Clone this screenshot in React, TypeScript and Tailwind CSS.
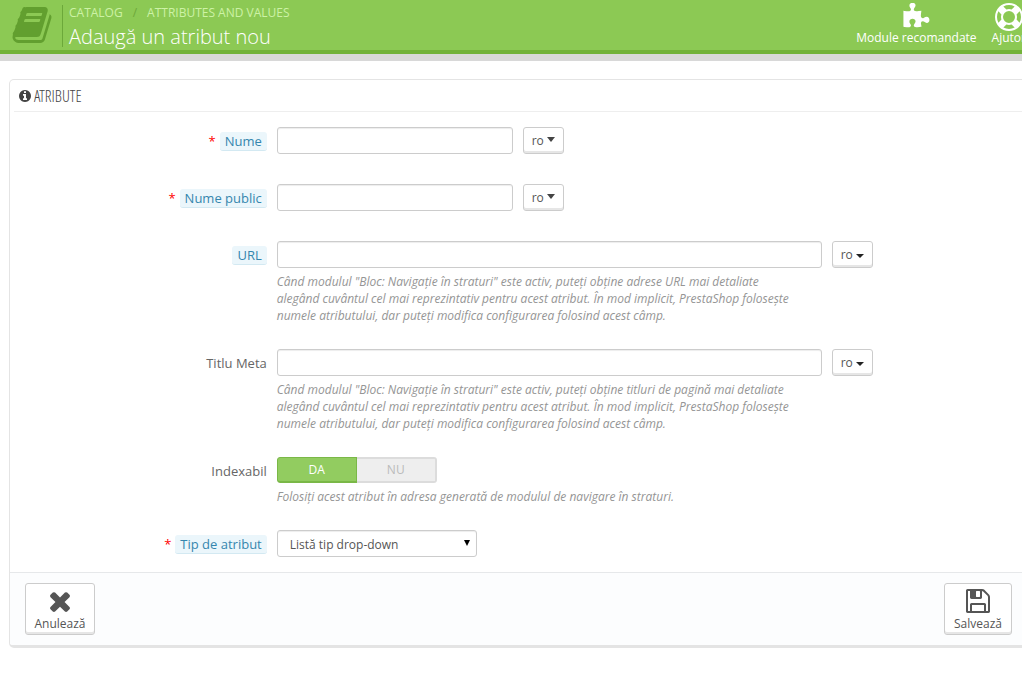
import React, { useState } from 'react';

const ICONS = {
  book: 'M1703 478q40 57 18 129l-275 906q-19 64-76.5 107.5t-122.5 43.5h-923q-77 0-148.5-53.5t-99.5-131.5q-24-67-2-127 0-4 3-27t4-37q1-8-3-21.5t-3-19.5q2-11 8-21t16.5-23.5 16.5-23.5q23-38 45-91.5t30-91.5q3-10 .5-30t-.5-28q3-11 17-28t17-23q21-36 42-92t25-90q1-9-2.5-32t.5-28q4-13 22-30.5t22-22.5q19-26 42.5-84.5t27.5-96.5q1-8-3-25.5t-2-26.5q2-8 9-18t18-23 17-21q8-12 16.5-30.5t15-35 16-36 19.5-32 26.5-23.5 36-11.5 47.5 5.5l-1 3q38-9 51-9h761q74 0 114 56t18 130l-274 906q-36 119-71.5 153.5t-128.5 34.5h-869q-27 0-38 15-11 16-1 43 24 70 144 70h923q29 0 56-15.5t35-41.5l300-987q7-22 5-57 38 15 59 43zm-1064 2q-4 13 2 22.5t20 9.5h608q13 0 25.5-9.5t16.5-22.5l21-64q4-13-2-22.5t-20-9.5h-608q-13 0-25.5 9.5t-16.5 22.5zm-83 256q-4 13 2 22.5t20 9.5h608q13 0 25.5-9.5t16.5-22.5l21-64q4-13-2-22.5t-20-9.5h-608q-13 0-25.5 9.5t-16.5 22.5z',
  puzzle: 'M1755 1083q0 81-44.5 135t-123.5 54q-41 0-77.5-17.5t-59-38-56.5-38-71-17.5q-110 0-110 124 0 39 16 115t15 115v5q-22 0-33 1-34 3-97.5 11.5t-115.5 13.5-98 5q-61 0-103-26.5t-42-83.5q0-37 17.5-71t38-56.5 38-59 17.5-77.5q0-79-54-123.5t-135-44.5q-84 0-143 45.5t-59 127.5q0 43 15 83t33.5 64.5 33.5 53 15 50.5q0 45-46 89-37 35-117 35-95 0-245-24-9-2-27.5-4t-27.5-4l-13-2q-1 0-3-1-2 0-2-1v-1024q2 1 17.5 3.5t34 5 21.5 3.5q150 24 245 24 80 0 117-35 46-44 46-89 0-22-15-50.5t-33.5-53-33.5-64.5-15-83q0-82 59-127.5t144-45.5q80 0 134 44.5t54 123.5q0 41-17.5 77.5t-38 59-38 56.5-17.5 71q0 57 42 83.5t103 26.5q64 0 180-15t163-17v2q-1 2-3.5 17.5t-5 34-3.5 21.5q-24 150-24 245 0 80 35 117 44 46 89 46 22 0 50.5-15t53-33.5 64.5-33.5 83-15q82 0 127.5 59t45.5 143z',
  lifeRing: 'M896 0q182 0 348 71t286 191 191 286 71 348-71 348-191 286-286 191-348 71-348-71-286-191-191-286-71-348 71-348 191-286 286-191 348-71zm0 128q-190 0-361 90l194 194q82-28 167-28t167 28l194-194q-171-90-361-90zm-678 1129l194-194q-28-82-28-167t28-167l-194-194q-90 171-90 361t90 361zm678 407q190 0 361-90l-194-194q-82 28-167 28t-167-28l-194 194q171 90 361 90zm0-384q159 0 271.5-112.5t112.5-271.5-112.5-271.5-271.5-112.5-271.5 112.5-112.5 271.5 112.5 271.5 271.5 112.5zm484-217l194 194q90-171 90-361t-90-361l-194 194q28 82 28 167t-28 167z',
  info: 'M1152 1376v-160q0-14-9-23t-23-9h-96v-512q0-14-9-23t-23-9h-320q-14 0-23 9t-9 23v160q0 14 9 23t23 9h96v320h-96q-14 0-23 9t-9 23v160q0 14 9 23t23 9h448q14 0 23-9t9-23zm-128-896v-160q0-14-9-23t-23-9h-192q-14 0-23 9t-9 23v160q0 14 9 23t23 9h192q14 0 23-9t9-23zm640 416q0 209-103 385.5t-279.5 279.5-385.5 103-385.5-103-279.5-279.5-103-385.5 103-385.5 279.5-279.5 385.5-103 385.5 103 279.5 279.5 103 385.5z',
  times: 'M1490 1322q0 40-28 68l-136 136q-28 28-68 28t-68-28l-294-294-294 294q-28 28-68 28t-68-28l-136-136q-28-28-28-68t28-68l294-294-294-294q-28-28-28-68t28-68l136-136q28-28 68-28t68 28l294 294 294-294q28-28 68-28t68 28l136 136q28 28 28 68t-28 68l-294 294 294 294q28 28 28 68z',
  save: 'M512 1536h768v-384h-768v384zm896 0h128v-896q0-14-10-38.5t-20-34.5l-281-281q-10-10-34-20t-39-10v416q0 40-28 68t-68 28h-576q-40 0-68-28t-28-68v-416h-128v1280h128v-416q0-40 28-68t68-28h832q40 0 68 28t28 68v416zm-384-928v-320q0-13-9.5-22.5t-22.5-9.5h-192q-13 0-22.5 9.5t-9.5 22.5v320q0 13 9.5 22.5t22.5 9.5h192q13 0 22.5-9.5t9.5-22.5zm640 32v928q0 40-28 68t-68 28h-1344q-40 0-68-28t-28-68v-1344q0-40 28-68t68-28h928q40 0 88 20t76 48l280 280q28 28 48 76t20 88z',
};

interface IconProps {
  name: keyof typeof ICONS;
  className?: string;
}

const Icon: React.FC<IconProps> = ({ name, className }) => (
  <svg viewBox="0 0 1792 1792" fill="currentColor" aria-hidden="true" className={className}>
    <path d={ICONS[name]} />
  </svg>
);

interface FieldProps {
  id: string;
  label: string;
  required?: boolean;
  hint?: boolean;
  help?: string;
  children: React.ReactNode;
}

const Field: React.FC<FieldProps> = ({ id, label, required, hint, help, children }) => (
  <div className="flex gap-[10px]">
    <div className="flex w-1/4 shrink-0 items-start justify-end gap-1 pt-[5px] text-[13px] leading-[18px]">
      {required && <span className="text-[#f00]">*</span>}
      <label
        htmlFor={id}
        className={hint ? 'rounded-[3px] border-b border-[#d3e9f2] bg-[#ebf6fb] px-[5px] text-[#3586ae]' : 'text-[#666]'}
      >
        {label}
      </label>
    </div>
    <div className="min-w-0 flex-1">
      <div className="flex gap-[10px]">{children}</div>
      {help && <p className="max-w-[520px] pt-[5px] text-[12px] leading-[17px] text-[#959595] italic">{help}</p>}
    </div>
  </div>
);

const inputClass = 'h-[27px] rounded-[3px] border border-[#ccc] bg-white px-2 text-[12px] shadow-[inset_0_1px_1px_rgba(0,0,0,0.075)] outline-none';

const LangButton: React.FC<{ large?: boolean }> = ({ large }) => (
  <button
    type="button"
    className="flex h-[27px] w-[41px] items-center justify-center gap-[3px] rounded-[3px] border border-[#ccc] bg-white text-[12px] shadow-[inset_0_-2px_0_#e6e6e6]"
  >
    ro
    {large ? (
      <svg viewBox="0 0 8 5" className="mb-[2px] h-[5px] w-[8px]" fill="#444" aria-hidden="true"><path d="M0 0h8L4 5z" /></svg>
    ) : (
      <svg viewBox="0 0 8 4" className="mt-[2px] h-[4px] w-[8px]" fill="#222" aria-hidden="true"><path d="M0 0h8L4 4z" /></svg>
    )}
  </button>
);

export default function App() {
  const [indexable, setIndexable] = useState(true);

  return (
    <div className="min-h-screen overflow-x-hidden bg-white font-['Open_Sans',sans-serif] text-[12px] text-[#555]">
      {/* Page header */}
      <header className="flex h-[61px] justify-between overflow-hidden border-b-[7px] border-[#d8d8d8] bg-[#8cc954] shadow-[inset_0_-4px_0_#72b239]">
        <div className="flex">
          <Icon name="book" className="mt-[4px] ml-[11px] h-[42px] w-[42px] text-[#629f2f]" />
          <div className="mt-[5px] ml-[9px] h-[42px] border-l border-[#6ca83a] pl-[6px]">
            <nav className="flex gap-[10px] text-[12px] leading-[16px] text-[#cdf2a6]">
              <a href="#catalog">CATALOG</a>
              <span className="text-[#6ca83a]">/</span>
              <a href="#attributes">ATTRIBUTES AND VALUES</a>
            </nav>
            <h1 className="text-[20px] leading-[32px] font-light text-white">Adaugă un atribut nou</h1>
          </div>
        </div>
        <div className="-mr-1 flex gap-[15px] text-[12px] text-white">
          <a href="#modules" className="flex flex-col items-center pt-[3px] leading-[14px]">
            <Icon name="puzzle" className="h-[28px] w-[28px]" />
            Module recomandate
          </a>
          <a href="#help" className="flex flex-col items-center pt-[3px] leading-[14px]">
            <Icon name="lifeRing" className="h-[28px] w-[28px]" />
            Ajutor
          </a>
        </div>
      </header>

      {/* Attribute form */}
      <form
        className="mt-[18px] -mr-4 ml-[9px] overflow-hidden rounded-[5px] border border-b-[3px] border-[#e4e4e4]"
        onSubmit={(e) => e.preventDefault()}
      >
        <h2 className="mx-1 flex h-8 items-center gap-[2px] border-b border-[#eee] px-1 font-['Open_Sans_Condensed_Light','Open_Sans_Condensed','Open_Sans',sans-serif] text-[16px] font-light text-[#444]">
          <Icon name="info" className="h-[14px] w-[14px]" />
          ATRIBUTE
        </h2>

        <div className="flex flex-col pt-[15px] pb-[15px]">
          <div className="flex flex-col gap-[30px]">
            <Field id="name" label="Nume" required hint>
              <input id="name" type="text" className={`${inputClass} w-[236px]`} />
              <LangButton large />
            </Field>
            <Field id="public-name" label="Nume public" required hint>
              <input id="public-name" type="text" className={`${inputClass} w-[236px]`} />
              <LangButton large />
            </Field>
            <Field
              id="url"
              label="URL"
              hint
              help={'Când modulul "Bloc: Navigație în straturi" este activ, puteți obține adrese URL mai detaliate alegând cuvântul cel mai reprezintativ pentru acest atribut. În mod implicit, PrestaShop folosește numele atributului, dar puteți modifica configurarea folosind acest câmp.'}
            >
              <input id="url" type="text" className={`${inputClass} w-[545px]`} />
              <LangButton />
            </Field>
          </div>
          <div className="flex flex-col gap-[25px] pt-[25px]">
            <Field
              id="meta-title"
              label="Titlu Meta"
              help={'Când modulul "Bloc: Navigație în straturi" este activ, puteți obține titluri de pagină mai detaliate alegând cuvântul cel mai reprezintativ pentru acest atribut. În mod implicit, PrestaShop folosește numele atributului, dar puteți modifica configurarea folosind acest câmp.'}
            >
              <input id="meta-title" type="text" className={`${inputClass} w-[545px]`} />
              <LangButton />
            </Field>
            <Field
              id="index-on"
              label="Indexabil"
              help="Folosiți acest atribut în adresa generată de modulul de navigare în straturi."
            >
              <div className="flex h-[26px] w-[160px] overflow-hidden rounded-[3px] bg-[#eee] text-center leading-[24px]">
                <label
                  className={`w-1/2 ${indexable ? 'rounded-l-[3px] border border-b-2 border-[#7ab847] bg-[#92cc60] text-white' : 'border border-[#d4d4d4] text-[#bbb]'}`}
                >
                  <input
                    id="index-on"
                    type="radio"
                    name="indexable"
                    className="sr-only"
                    checked={indexable}
                    onChange={() => setIndexable(true)}
                  />
                  DA
                </label>
                <label
                  className={`w-1/2 ${indexable ? 'rounded-r-[3px] border-2 border-l-0 border-[#dcdcdc] leading-[22px] text-[#bbb]' : 'border border-b-2 border-[#d9534f] bg-[#e08f95] text-white'}`}
                >
                  <input
                    type="radio"
                    name="indexable"
                    className="sr-only"
                    checked={!indexable}
                    onChange={() => setIndexable(false)}
                  />
                  NU
                </label>
              </div>
            </Field>
            <Field id="type" label="Tip de atribut" required hint>
              <div className="relative w-[200px]">
                <select id="type" className={`${inputClass} w-full appearance-none pt-[2px] pl-3`}>
                  <option>Listă tip drop-down</option>
                </select>
                <svg
                  viewBox="0 0 6 6"
                  className="pointer-events-none absolute top-[10px] right-[7px] h-[6px] w-[6px]"
                  aria-hidden="true"
                >
                  <path d="M0 0h6L3 6z" />
                </svg>
              </div>
            </Field>
          </div>
        </div>

        {/* Footer actions */}
        <div className="flex h-[73px] justify-between border-t border-[#e6e8ea] bg-[#fcfdfe] pt-[10px] pr-[25px] pl-[15px]">
          <button
            type="button"
            className="flex h-[52px] w-[70px] flex-col items-center rounded-[3px] border border-[#ccc] bg-white pt-[2px] leading-[14px] shadow-[inset_0_-2px_0_#e6e6e6]"
          >
            <Icon name="times" className="mb-px h-[30px] w-[30px]" />
            Anulează
          </button>
          <button
            type="submit"
            className="flex h-[52px] w-[68px] flex-col items-center rounded-[3px] border border-[#ccc] bg-white pt-[3px] leading-[14px] shadow-[inset_0_-2px_0_#e6e6e6]"
          >
            <Icon name="save" className="mb-[2px] h-[28px] w-[28px]" />
            Salvează
          </button>
        </div>
      </form>
    </div>
  );
}
